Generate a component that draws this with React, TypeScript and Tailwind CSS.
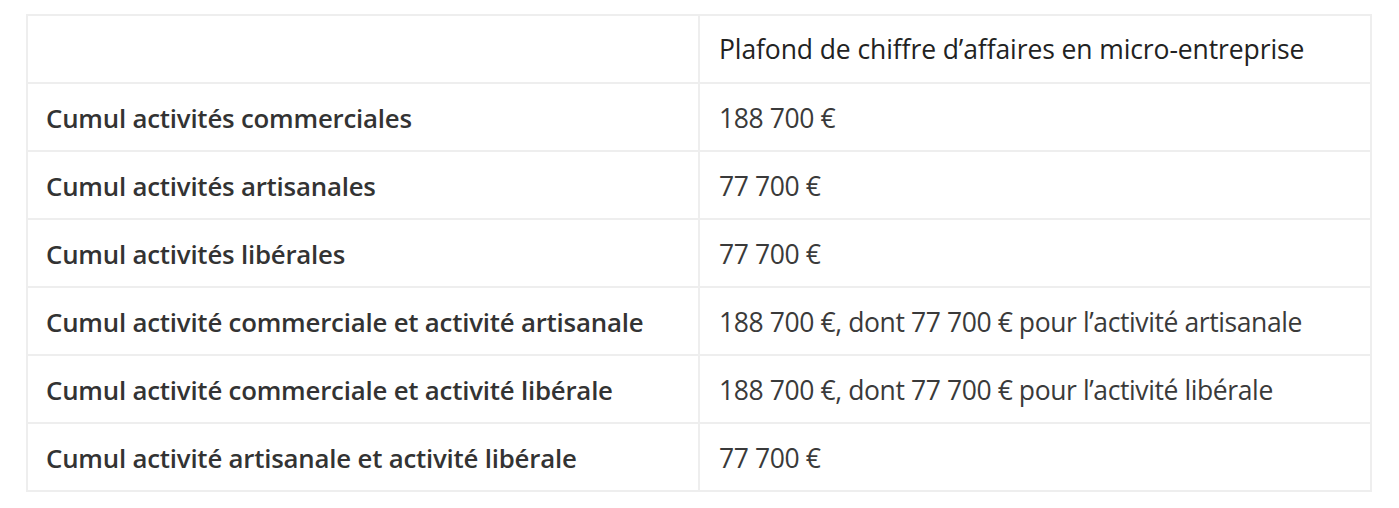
const ROWS = [
  ['Cumul activités commerciales', '188 700 €'],
  ['Cumul activités artisanales', '77 700 €'],
  ['Cumul activités libérales', '77 700 €'],
  ['Cumul activité commerciale et activité artisanale', '188 700 €, dont 77 700 € pour l’activité artisanale'],
  ['Cumul activité commerciale et activité libérale', '188 700 €, dont 77 700 € pour l’activité libérale'],
  ['Cumul activité artisanale et activité libérale', '77 700 €'],
]

export default function App() {
  return (
    <div className="min-h-[508px] bg-white pt-[14px] pl-[26px] pr-[27px] font-['Open_Sans',sans-serif] text-[#333]">
      <table className="w-full border-collapse">
        <thead>
          <tr className="h-[68px]">
            <th className="w-[672px] border-2 border-[#eeeeee]" />
            <th className="border-2 border-[#eeeeee] pl-[19px] pt-[2px] text-left text-[26.5px] font-normal tracking-[-0.1px] text-[#222]">
              Plafond de chiffre d’affaires en micro-entreprise
            </th>
          </tr>
        </thead>
        <tbody>
          {ROWS.map(([label, value]) => (
            <tr key={label} className="h-[68px]">
              <td className="border-2 border-[#eeeeee] pl-[18px] pt-[3px] text-[25.8px] font-semibold tracking-[-0.2px] text-[#333]">{label}</td>
              <td className="border-2 border-[#eeeeee] pl-[19px] pt-[3px] text-[26.5px] tracking-[-0.4px] text-[#3a3a3a]">{value}</td>
            </tr>
          ))}
        </tbody>
      </table>
    </div>
  )
}
